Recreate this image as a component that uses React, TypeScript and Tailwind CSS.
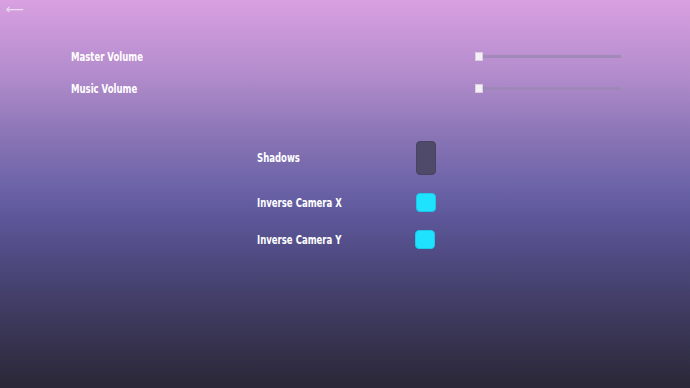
const font = { fontFamily: '"DejaVu Sans Condensed", "DejaVu Sans", sans-serif' };

function Slider() {
  return (
    <div className="flex items-center w-[146px]">
      <div className="w-[8px] h-[9px] bg-[#f4f0f6] border border-[#d8d0e0] shrink-0" />
      <div className="flex-1 h-[3px] bg-[#9a88b4]/80" />
    </div>
  );
}

function Toggle({ on }: { on: boolean }) {
  return (
    <div
      className={
        on
          ? 'w-[20px] h-[19px] rounded-[4px] bg-[#1fe2ff] border border-[#1ac8e8]'
          : 'w-[20px] h-[34px] rounded-[4px] bg-[#4f4a69] border border-[#48435f]'
      }
    />
  );
}

function Label({ children }: { children: string }) {
  return (
    <span className="inline-block text-[12px] font-bold leading-none origin-left scale-x-[0.79] whitespace-nowrap">
      {children}
    </span>
  );
}

export default function App() {
  return (
    <div
      className="w-[690px] h-[388px] overflow-hidden bg-[linear-gradient(to_bottom,#d9a0e1_0%,#b18bcb_20%,#8f78b8_33%,#6c63a8_48%,#5d579a_56%,#4a4678_70%,#3a3656_85%,#2a2737_100%)] text-white"
      style={font}
    >
      <div className="h-[16px] pl-[6px] pt-[2px] text-[#e8def0] text-[14px] leading-none">⟵</div>

      <div className="pl-[71px] pr-[69px] pt-[36px] flex flex-col gap-[23px]">
        <div className="flex items-center justify-between h-[9px]">
          <Label>Master Volume</Label>
          <Slider />
        </div>
        <div className="flex items-center justify-between h-[9px]">
          <Label>Music Volume</Label>
          <Slider />
        </div>
      </div>

      <div className="pl-[257px] pt-[48px] flex flex-col">
        <div className="flex items-center h-[34px] w-[179px] justify-between">
          <Label>Shadows</Label>
          <Toggle on={false} />
        </div>
        <div className="flex items-center h-[19px] w-[179px] justify-between mt-[18px]">
          <Label>Inverse Camera X</Label>
          <Toggle on />
        </div>
        <div className="flex items-center h-[19px] w-[178px] justify-between mt-[18px]">
          <Label>Inverse Camera Y</Label>
          <Toggle on />
        </div>
      </div>
    </div>
  );
}
